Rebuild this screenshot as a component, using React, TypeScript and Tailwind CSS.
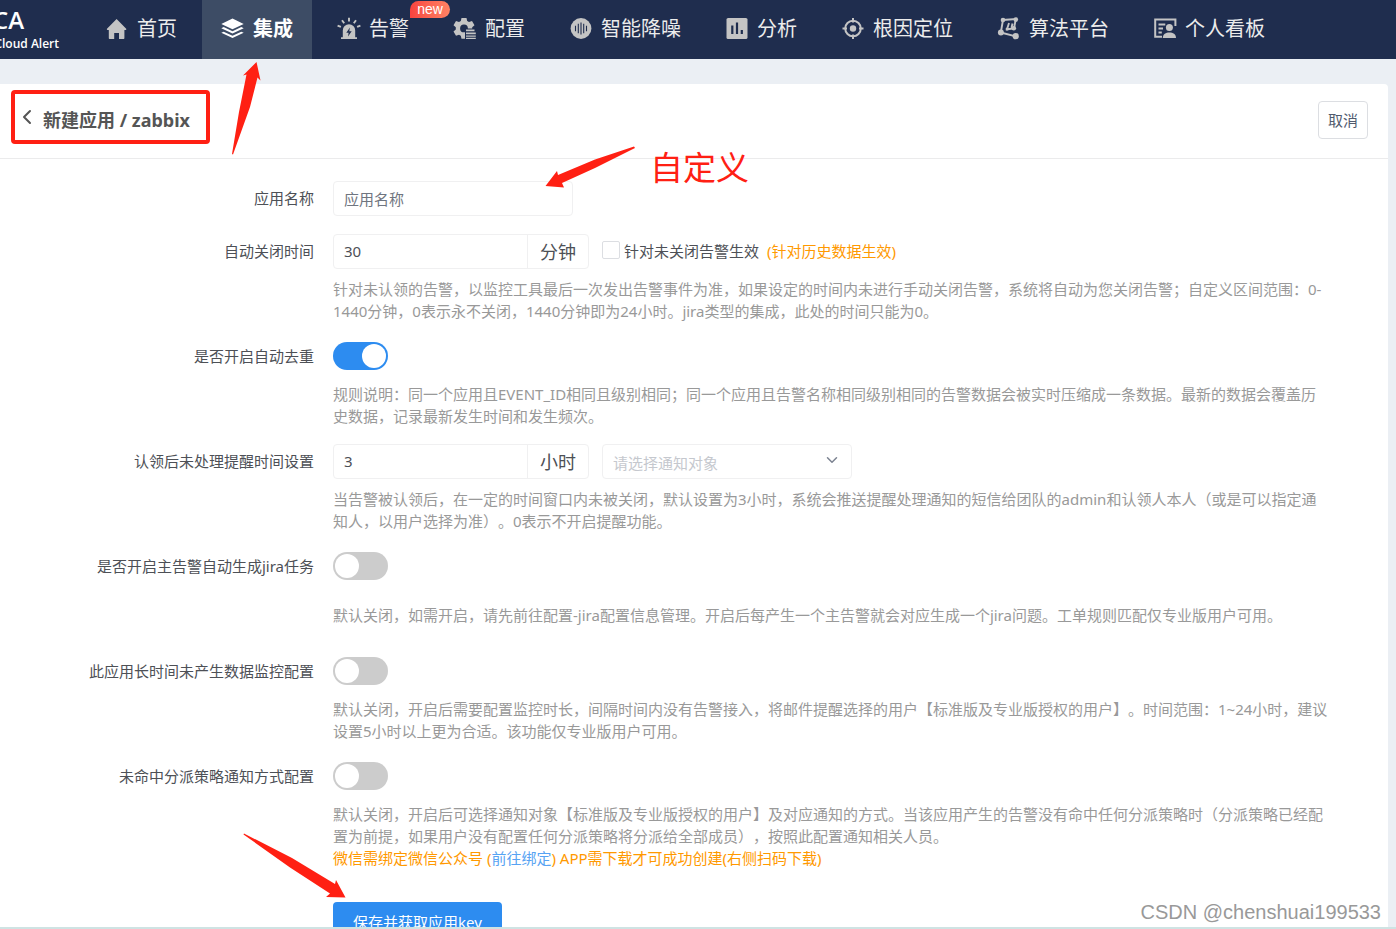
import React, { useState } from 'react';
import { ChevronDown, ChevronLeft } from 'lucide-react';

const UI_FONT = "font-['Noto_Sans','Noto_Sans_CJK_SC',sans-serif]";

const HomeIcon = () => (
  <svg width="24" height="24" viewBox="0 0 24 24" fill="currentColor" aria-hidden="true">
    <path d="M11.600 2 2 11.800c-.4.5-.1 1.200.5 1.200h1.300v8c0 .6.4 1 1 1h4.400v-6h4.800v6h4.400c.6 0 1-.4 1-1v-8h1.300c.6 0 .9-.7.5-1.200z" />
  </svg>
);

const LayersIcon = () => (
  <svg width="24" height="24" viewBox="0 0 24 24" fill="currentColor" aria-hidden="true">
    <path d="M11.500 1.500.3 7 11.500 12.300 22.700 7z" />
    <path d="m.3 11.200 2.400-1.100 8.800 4.100 8.800-4.100 2.400 1.100-11.200 5.300z" />
    <path d="m.3 15.800 2.400-1.100 8.800 4.100 8.800-4.100 2.400 1.100-11.200 5.300z" />
  </svg>
);

const AlarmIcon = () => (
  <svg width="24" height="24" viewBox="0 0 24 24" aria-hidden="true">
    <path d="M5.800 20.200v-6.700a6.200 6.200 0 0 1 12.400 0v6.700h1.800V22H4v-1.800z" fill="currentColor" />
    <path d="M12.900 10.600 9.300 15.800h2.300l-.6 3.600 3.700-5.200h-2.400z" fill="#1f2d4e" />
    <path d="M12 .8v3.600M5 3.200l2.200 3M19 3.200l-2.200 3M.6 8.600l3.300 1.300M23.400 8.600l-3.300 1.300" stroke="currentColor" strokeWidth="1.900" />
  </svg>
);

const GearIcon = () => (
  <svg width="24" height="24" viewBox="0 0 24 24" aria-hidden="true">
    <path
      fill="currentColor"
      fillRule="evenodd"
      d="M8.500 1h5l.7 3 1.800 1 3-1 2.500 4.300-2.300 2v2.100l2.300 2-2.500 4.300-3-1-1.800 1-.7 3h-5l-.7-3-1.800-1-3 1L.5 14.400l2.300-2v-2.100l-2.300-2L3 4l3 1 1.800-1zM11 7.500a3.900 3.900 0 1 0 0 7.800 3.900 3.900 0 0 0 0-7.800z"
    />
    <path d="M12 11.500h12V24H12z" fill="#1f2d4e" />
    <path d="M13 12.600h8.500v1.700H13zM13 15.600h9.800v1.700H13zM13 18.400h9.800v1.300H13zM13 20.700h9.800V22H13z" fill="currentColor" />
  </svg>
);

const NoiseIcon = () => (
  <svg width="24" height="24" viewBox="0 0 24 24" aria-hidden="true">
    <circle cx="12" cy="11.500" r="10.400" fill="currentColor" />
    <path d="M6.500 8.700v5.600M9.300 6.800v9.400M12 5.500v12M14.700 6.800v9.400M17.500 8.700v5.600" stroke="#1f2d4e" strokeWidth="1.100" />
  </svg>
);

const ChartIcon = () => (
  <svg width="24" height="24" viewBox="0 0 24 24" aria-hidden="true">
    <rect x="1.500" y="1" width="21" height="21" rx="1.600" fill="currentColor" />
    <path d="M7.300 8.500V17M12 5.500V17M16.800 13v4" stroke="#1f2d4e" strokeWidth="2.200" />
  </svg>
);

const TargetIcon = () => (
  <svg width="24" height="24" viewBox="0 0 24 24" fill="none" stroke="currentColor" strokeWidth="2" aria-hidden="true">
    <circle cx="12" cy="11.500" r="7.800" />
    <circle cx="12" cy="11.500" r="3.200" fill="currentColor" stroke="none" />
    <path d="M12 1v4.500M12 17.500V22M1.500 11.500H6M18 11.500h4.500" />
  </svg>
);

const AlgorithmIcon = () => (
  <svg width="24" height="24" viewBox="0 0 24 24" fill="none" stroke="currentColor" strokeWidth="1.900" aria-hidden="true">
    <path d="M3.800 15.500 6 3 18.800 2 17 11.500 10 12.300 12 6M15.500 6.500 14.500 11M3.800 15.500 18.700 19.300" />
    <g fill="currentColor" stroke="none">
      <circle cx="6" cy="3" r="2.300" />
      <circle cx="18.800" cy="2.600" r="2.300" />
      <circle cx="16.800" cy="11.300" r="2.300" />
      <circle cx="10.200" cy="12" r="1.600" />
      <circle cx="3.900" cy="15.600" r="3" />
      <circle cx="18.700" cy="19.200" r="3.100" />
    </g>
  </svg>
);

const BoardIcon = () => (
  <svg width="24" height="24" viewBox="0 0 24 24" aria-hidden="true">
    <path d="M9 19.700H2.200V2.500h20.200V9M5.500 7.500h6.800M5.500 11.500h4.500M5.500 15.500h3.300" fill="none" stroke="currentColor" strokeWidth="2" />
    <circle cx="16.400" cy="10.500" r="3.500" fill="currentColor" />
    <path d="M9.800 21c0-4 3-5.600 6.600-5.600S23 17 23 21z" fill="currentColor" />
  </svg>
);

interface NavItem {
  label: string;
  icon: React.FC;
  active?: boolean;
  badge?: string;
}

const navItems: NavItem[] = [
  { label: '首页', icon: HomeIcon },
  { label: '集成', icon: LayersIcon, active: true },
  { label: '告警', icon: AlarmIcon, badge: 'new' },
  { label: '配置', icon: GearIcon },
  { label: '智能降噪', icon: NoiseIcon },
  { label: '分析', icon: ChartIcon },
  { label: '根因定位', icon: TargetIcon },
  { label: '算法平台', icon: AlgorithmIcon },
  { label: '个人看板', icon: BoardIcon },
];

const Header = () => (
  <header className="flex h-[59px] shrink-0 bg-[#1f2d4e]">
    <div className="flex w-[86px] shrink-0 flex-col items-start overflow-hidden pt-1 font-['Open_Sans',sans-serif] font-semibold text-white">
      <div className="flex w-6 justify-end text-2xl leading-8">CA</div>
      <div className="flex w-[59px] justify-end text-xs leading-4 whitespace-nowrap">Cloud Alert</div>
    </div>
    <nav className="flex gap-[6px]">
      {navItems.map(({ label, icon: Icon, active, badge }) => (
        <a
          key={label}
          href="#"
          className={`relative flex items-center gap-2 pr-[19px] pl-[19px] pb-[2px] text-xl whitespace-nowrap ${
            active ? 'bg-[#3d4c65] font-bold text-white' : 'text-[#ececec]'
          }`}
        >
          <span className={active ? 'text-white' : 'text-[#c4c4c4]'}>
            <Icon />
          </span>
          {label}
          {badge && (
            <span className="absolute top-px -right-[22px] flex h-[17px] w-10 items-center justify-center rounded-t-full rounded-br-full bg-linear-to-r from-[#f8423f] to-[#ff8264] pb-px font-['Liberation_Sans',sans-serif] text-sm text-white">
              {badge}
            </span>
          )}
        </a>
      ))}
    </nav>
  </header>
);

interface FormRowProps {
  id: string;
  label: string;
  help?: string;
  children: React.ReactNode;
}

const FormRow: React.FC<FormRowProps> = ({ id, label, help, children }) => (
  <div className="flex gap-[19px]">
    <label htmlFor={id} className="w-[314px] shrink-0 text-right leading-[35px] text-[#4d5056]">
      {label}
    </label>
    <div className="min-w-0 flex-1 pr-10">
      <div className="flex h-[35px] items-center">{children}</div>
      {help && (
        <p className="mt-[9px] mb-[17px] flex min-h-11 items-center leading-[22px] whitespace-pre-line text-[#999]">{help}</p>
      )}
    </div>
  </div>
);

const Toggle: React.FC<{ id: string; defaultChecked?: boolean }> = ({ id, defaultChecked }) => (
  <input
    id={id}
    type="checkbox"
    role="switch"
    defaultChecked={defaultChecked}
    className="mb-px h-7 w-[55px] cursor-pointer appearance-none rounded-full bg-[#ccc] p-[2px] before:block before:size-6 before:rounded-full before:bg-white checked:bg-[#2d8cf0] checked:before:ml-[27px]"
  />
);

const UnitInput: React.FC<{ id: string; defaultValue: string; unit: string }> = ({ id, defaultValue, unit }) => (
  <div className="flex h-[35px] w-64 rounded border border-[#f0f0f1]">
    <input id={id} defaultValue={defaultValue} className="min-w-0 flex-1 px-[10px] text-[#4d5056] outline-none" />
    <span className="flex w-[61px] items-center justify-center border-l border-[#f0f0f1] text-lg text-[#4d5056]">{unit}</span>
  </div>
);

const Arrow: React.FC<{ className: string; viewBox: string; d: string }> = ({ className, viewBox, d }) => (
  <svg className={`pointer-events-none absolute ${className}`} viewBox={viewBox} fill="#ff2013" aria-hidden="true">
    <path d={d} />
  </svg>
);

export default function App() {
  const [target, setTarget] = useState('');

  return (
    <div className={`relative flex h-screen flex-col overflow-hidden bg-[#ebeff4] text-[15px] ${UI_FONT} [text-spacing-trim:space-all]`}>
      <Header />

      <main className="mt-[25px] mr-2 flex-1 rounded-tr bg-white">
        <div className="flex h-[75px] items-start justify-between border-b border-[#ebebec] pt-[6px] pr-5 pl-[11px]">
          <div className="flex h-[54px] items-center gap-1 rounded border-4 border-[#ff2013] pr-4">
            <button type="button" aria-label="返回" className="text-[#555]">
              <ChevronLeft size={24} strokeWidth={2} />
            </button>
            <h1 className="pt-[6px] text-lg font-bold whitespace-nowrap text-[#555]">新建应用 / zabbix</h1>
          </div>
          <button type="button" className="mt-[11px] h-[38px] w-[50px] rounded border border-[#dcdee2] text-[#515a6e]">
            取消
          </button>
        </div>

        <form className="pt-[22px]" onSubmit={(e) => e.preventDefault()}>
          <div className="mb-[18px]">
            <FormRow id="name" label="应用名称">
              <input
                id="name"
                placeholder="应用名称"
                className="h-[35px] w-60 rounded border border-[#f0f0f1] px-[10px] outline-none placeholder:text-[#6f7580]"
              />
            </FormRow>
          </div>

          <FormRow
            id="closeTime"
            label="自动关闭时间"
            help={'针对未认领的告警，以监控工具最后一次发出告警事件为准，如果设定的时间内未进行手动关闭告警，系统将自动为您关闭告警；自定义区间范围：0-\n1440分钟，0表示永不关闭，1440分钟即为24小时。jira类型的集成，此处的时间只能为0。'}
          >
            <UnitInput id="closeTime" defaultValue="30" unit="分钟" />
            <label className="ml-[13px] flex items-center gap-1 text-[#4d5056]">
              <input
                type="checkbox"
                className="mb-[3px] size-[18px] appearance-none rounded-xs border border-[#dcdee2] checked:bg-[#2d8cf0]"
              />
              针对未关闭告警生效
            </label>
            <span className="ml-2 text-[#ff9900]">(针对历史数据生效)</span>
          </FormRow>

          <FormRow
            id="dedupe"
            label="是否开启自动去重"
            help={'规则说明：同一个应用且EVENT_ID相同且级别相同；同一个应用且告警名称相同级别相同的告警数据会被实时压缩成一条数据。最新的数据会覆盖历\n史数据，记录最新发生时间和发生频次。'}
          >
            <Toggle id="dedupe" defaultChecked />
          </FormRow>

          <FormRow
            id="remindTime"
            label="认领后未处理提醒时间设置"
            help={'当告警被认领后，在一定的时间窗口内未被关闭，默认设置为3小时，系统会推送提醒处理通知的短信给团队的admin和认领人本人（或是可以指定通\n知人，以用户选择为准）。0表示不开启提醒功能。'}
          >
            <UnitInput id="remindTime" defaultValue="3" unit="小时" />
            <div className="relative ml-[13px] h-[35px] w-[250px]">
              <select
                aria-label="请选择通知对象"
                value={target}
                onChange={(e) => setTarget(e.target.value)}
                className="size-full appearance-none rounded border border-[#f0f0f1] px-[10px] pt-1 text-[#c5c8ce] outline-none"
              >
                <option value="">请选择通知对象</option>
              </select>
              <ChevronDown size={18} className="pointer-events-none absolute top-[7px] right-[11px] text-[#7c8391]" />
            </div>
          </FormRow>

          <FormRow
            id="jira"
            label="是否开启主告警自动生成jira任务"
            help="默认关闭，如需开启，请先前往配置-jira配置信息管理。开启后每产生一个主告警就会对应生成一个jira问题。工单规则匹配仅专业版用户可用。"
          >
            <Toggle id="jira" />
          </FormRow>

          <FormRow
            id="noData"
            label="此应用长时间未产生数据监控配置"
            help={'默认关闭，开启后需要配置监控时长，间隔时间内没有告警接入，将邮件提醒选择的用户【标准版及专业版授权的用户】。时间范围：1~24小时，建议\n设置5小时以上更为合适。该功能仅专业版用户可用。'}
          >
            <Toggle id="noData" />
          </FormRow>

          <FormRow id="dispatch" label="未命中分派策略通知方式配置">
            <Toggle id="dispatch" />
          </FormRow>

          <div className="ml-[333px] pr-10">
            <p className="mt-[9px] leading-[22px] whitespace-pre-line text-[#999]">
              {'默认关闭，开启后可选择通知对象【标准版及专业版授权的用户】及对应通知的方式。当该应用产生的告警没有命中任何分派策略时（分派策略已经配\n置为前提，如果用户没有配置任何分派策略将分派给全部成员），按照此配置通知相关人员。'}
            </p>
            <p className="leading-[22px] text-[#ff9900]">
              微信需绑定微信公众号 (
              <a href="#" className="text-[#57a3f3]">前往绑定</a>) APP需下载才可成功创建(右侧扫码下载)
            </p>
            <button type="submit" className="mt-[33px] h-10 w-[169px] rounded bg-[#2d8cf0] text-white">
              保存并获取应用key
            </button>
          </div>
        </form>
      </main>

      <Arrow
        className="top-[62px] left-[230px] h-[93px] w-8"
        viewBox="0 0 32 93"
        d="M26.500 0 30.500 18.500 27.500 15.500 20 45 3 92.500 2 92 9 50 16.500 12.500 13 13.500z"
      />
      <Arrow
        className="top-[145px] left-[545px] h-[44px] w-[91px]"
        viewBox="0 0 91 44"
        d="M.5 41 12 26 13 30 50 14.500 89 1.500 90 3 50 23 17 38 19 42.500z"
      />
      <Arrow
        className="top-[832px] left-[242px] h-[67px] w-[105px]"
        viewBox="0 0 105 67"
        d="M2 1.500 50 26 93 52 94 48 103.500 65.500 84 65 88 61.500 48 35.500 1.500 2.500z"
      />
      <span className="pointer-events-none absolute top-[143px] left-[650px] text-[33px] leading-[50px] text-[#ff2013]">自定义</span>

      <span className="pointer-events-none absolute right-[15px] bottom-[5px] font-['Liberation_Sans',sans-serif] text-xl leading-6 text-[#999] [text-shadow:-1px_-1px_0_#fff]">
        CSDN @chenshuai199533
      </span>
      <div className="absolute inset-x-0 bottom-0 h-[2px] bg-[#cfe3e3]" />
    </div>
  );
}
